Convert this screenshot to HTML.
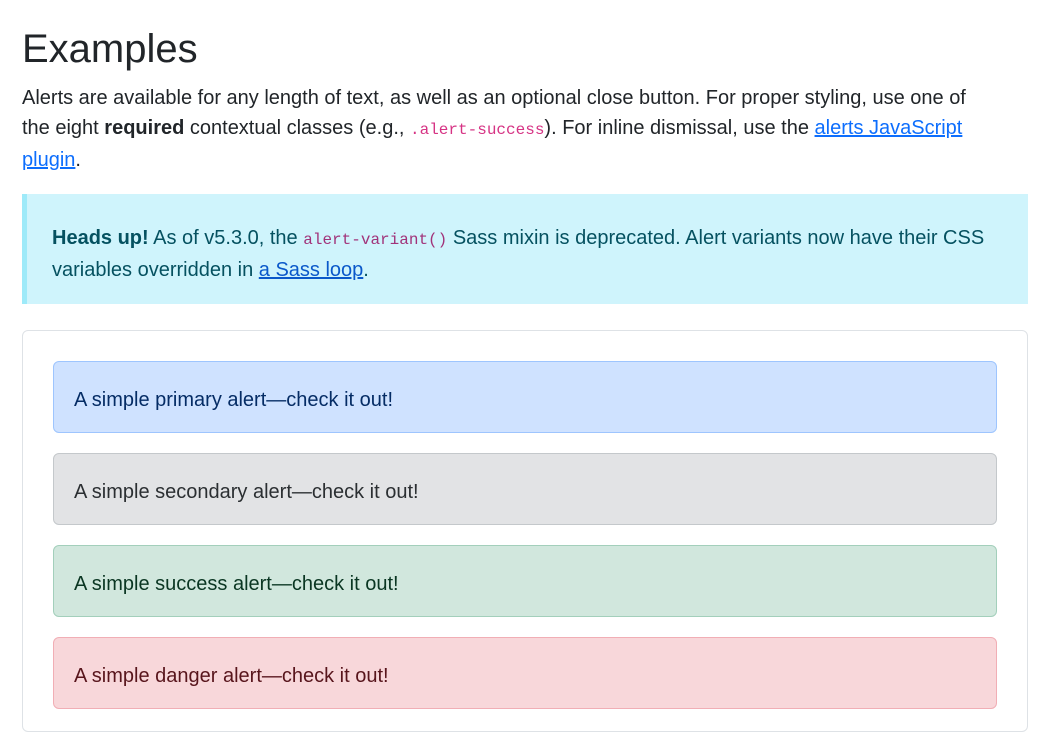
<!DOCTYPE html>
<html><head><meta charset="utf-8"><style>
body{margin:0;background:#fff;font-family:"Liberation Sans","NanumGothic",sans-serif;color:#212529;font-size:20px;line-height:30px;}
h1{position:absolute;left:22px;top:24px;margin:0;font-size:40px;font-weight:400;line-height:50px;}
.p{position:absolute;left:22px;top:83px;width:1000px;white-space:nowrap;}
code{font-family:"Liberation Mono",monospace;font-size:16px;color:#d63384;}
a{color:#0d6efd;}
.call{position:absolute;left:22px;top:194px;width:1001px;height:110px;background:#cff4fc;border-left:5px solid #9eeaf9;color:#055160;white-space:nowrap;}
.call a{color:#0a58ca;}
.call code{color:#a1337a;}
.ex{position:absolute;left:22px;top:330px;width:1004px;height:400px;border:1px solid #dee2e6;border-radius:6px;}
.al{position:absolute;left:30px;width:922px;height:70px;border:1px solid;border-radius:6px;padding-left:20px;line-height:76px;}
</style></head><body>
<h1>Examples</h1>
<div class="p">Alerts are available for any length of text, as well as an optional close button. For proper styling, use one of<br>the eight <b>required</b> contextual classes (e.g., <code>.alert-success</code>). For inline dismissal, use the <a href="#">alerts JavaScript</a><br><a href="#">plugin</a>.</div>
<div class="call"><div style="position:absolute;left:25px;top:29px"><b>Heads up!</b> As of v5.3.0, the <code>alert-variant()</code> Sass mixin is deprecated. Alert variants now have their CSS<br>variables overridden in <a href="#">a Sass loop</a>.</div></div>
<div class="ex">
<div class="al" style="top:30px;background:#cfe2ff;border-color:#9ec5fe;color:#052c65">A simple primary alert—check it out!</div>
<div class="al" style="top:122px;background:#e2e3e5;border-color:#c4c8cb;color:#2b2f32">A simple secondary alert—check it out!</div>
<div class="al" style="top:214px;background:#d1e7dd;border-color:#a3cfbb;color:#0a3622">A simple success alert—check it out!</div>
<div class="al" style="top:306px;background:#f8d7da;border-color:#f1aeb5;color:#58151c">A simple danger alert—check it out!</div>
</div>
</body></html>
